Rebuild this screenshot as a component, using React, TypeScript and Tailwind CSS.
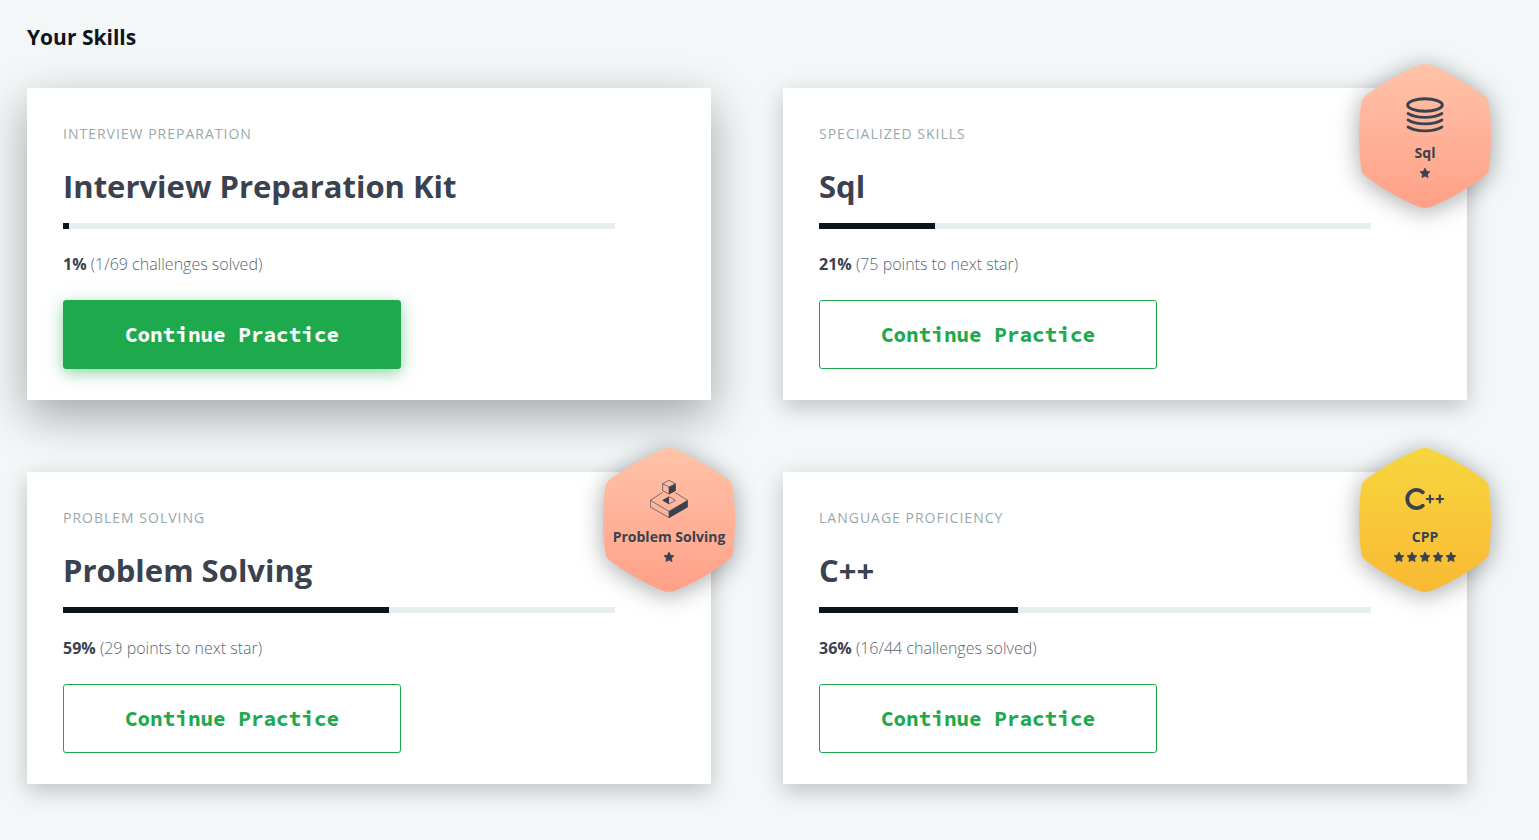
import type { ReactNode } from "react";

type BadgeTone = "bronze" | "gold";

interface Badge {
  name: string;
  stars: number;
  tone: BadgeTone;
  icon: ReactNode;
}

interface Skill {
  id: string;
  category: string;
  title: string;
  percent: number;
  detail: string;
  featured?: boolean;
  badge?: Badge;
}

const tones: Record<BadgeTone, [string, string]> = {
  bronze: ["#ffc3a8", "#ffa088"],
  gold: ["#f7d63e", "#f9b934"],
};

function SqlIcon() {
  return (
    <svg viewBox="0 0 38 38" className="size-[38px]" fill="none" stroke="#39424e" strokeLinecap="round" aria-hidden="true">
      <ellipse cx="19" cy="9" rx="17.3" ry="6.2" strokeWidth="3" />
      <path d="M2 17.5C10 22.6 28 22.6 36 17.5M2 24C10 29.1 28 29.1 36 24M2 31C10 36.1 28 36.1 36 31" strokeWidth="2.7" />
    </svg>
  );
}

function ProblemSolvingIcon() {
  return (
    <svg viewBox="180 135 114 114" className="size-[38px]" fill="none" aria-hidden="true">
      <g stroke="#39424e" strokeWidth="2" strokeLinejoin="round">
        <path d="M218 172L181 196V216L237 248L293 216V196L256 173M181 196L237 229L293 196M237 229V248" />
        <path d="M237 185L256 196L237 207L218 196Z" />
        <path d="M237 136L256 146V167L237 177L218 167V146ZM218 146L237 156L256 146M237 156V177" />
      </g>
      <path fill="#39424e" d="M237 229L293 196V216L237 249ZM237 156L257 146V167L237 178ZM237 185V207L218 196Z" />
    </svg>
  );
}

function CppIcon() {
  return (
    <svg viewBox="0 0 40 38" className="h-[38px] w-[40px]" fill="none" stroke="#39424e" strokeLinecap="round" aria-hidden="true">
      <path d="M17.8 12.3A9.2 9.2 0 1 0 17.8 25.7" strokeWidth="3.8" />
      <path d="M21.8 19H28.2M25 15.6V22.4M31.6 19H38M34.8 15.6V22.4" strokeWidth="2.2" />
    </svg>
  );
}

function Star() {
  return (
    <svg viewBox="0 0 24 24" className="size-3" fill="#39424e" stroke="#39424e" strokeWidth="1.6" strokeLinejoin="round" aria-hidden="true">
      <path d="M12 2.2L15 8.6L21.8 9.5L16.9 14.4L18.1 21.2L12 18L5.9 21.2L7.1 14.4L2.2 9.5L9 8.6Z" />
    </svg>
  );
}

function SkillBadge({ id, badge }: { id: string; badge: Badge }) {
  const [from, to] = tones[badge.tone];
  return (
    <div className="absolute -top-6 -right-6 h-36 w-[132px]">
      <svg viewBox="0 0 132 144" className="absolute inset-0 size-full overflow-visible drop-shadow-[0_3px_12px_rgba(0,0,0,0.35)]" aria-hidden="true">
        <defs>
          <linearGradient id={`tone-${id}`} x1="0" y1="0" x2="0" y2="1">
            <stop offset="0" stopColor={from} />
            <stop offset="1" stopColor={to} />
          </linearGradient>
        </defs>
        <path
          fill={`url(#tone-${id})`}
          d="M60 1.2Q66 -1.2 72 1.2C89 8 110 20 125 31.5Q129 34.5 129.8 39C132.7 60 132.7 84 129.8 105Q129 109.5 125 112.5C110 124 89 136 72 142.8Q66 145.2 60 142.8C43 136 22 124 7 112.5Q3 109.5 2.2 105C-.7 84 -.7 60 2.2 39Q3 34.5 7 31.5C22 20 43 8 60 1.2Z"
        />
      </svg>
      <div className="relative flex flex-col items-center pt-8">
        {badge.icon}
        <span className="mt-[9px] text-sm leading-5 font-bold whitespace-nowrap text-[#39424e]">{badge.name}</span>
        <span className="mt-1 flex gap-px">
          {Array.from({ length: badge.stars }, (_, i) => (
            <Star key={i} />
          ))}
        </span>
      </div>
    </div>
  );
}

const skills: Skill[] = [
  {
    id: "interview",
    category: "Interview Preparation",
    title: "Interview Preparation Kit",
    percent: 1,
    detail: "(1/69 challenges solved)",
    featured: true,
  },
  {
    id: "sql",
    category: "Specialized Skills",
    title: "Sql",
    percent: 21,
    detail: "(75 points to next star)",
    badge: { name: "Sql", stars: 1, tone: "bronze", icon: <SqlIcon /> },
  },
  {
    id: "problem-solving",
    category: "Problem Solving",
    title: "Problem Solving",
    percent: 59,
    detail: "(29 points to next star)",
    badge: { name: "Problem Solving", stars: 1, tone: "bronze", icon: <ProblemSolvingIcon /> },
  },
  {
    id: "cpp",
    category: "Language Proficiency",
    title: "C++",
    percent: 36,
    detail: "(16/44 challenges solved)",
    badge: { name: "CPP", stars: 5, tone: "gold", icon: <CppIcon /> },
  },
];

function SkillCard({ skill }: { skill: Skill }) {
  const shadow = skill.featured
    ? "shadow-[0_16px_44px_rgba(0,0,0,0.33)]"
    : "shadow-[0_7px_22px_rgba(0,0,0,0.22)]";
  const button = skill.featured
    ? "bg-[#1ea94c] text-white shadow-[0_4px_16px_rgba(30,169,76,0.5)]"
    : "bg-white text-[#1ea94c]";
  return (
    <article className={`relative bg-white px-9 pt-9 pb-[31px] ${shadow}`}>
      <p className="text-sm leading-5 tracking-[1px] text-[#97aaac] uppercase">{skill.category}</p>
      <h2 className="mt-6 text-[31px] leading-9 font-bold text-[#39424e]">{skill.title}</h2>
      <div
        className="mt-[19px] mr-[60px] h-1.5 bg-[#e7eeef]"
        role="progressbar"
        aria-label={skill.title}
        aria-valuenow={skill.percent}
        aria-valuemin={0}
        aria-valuemax={100}
      >
        <div className="h-full bg-[#0e141e]" style={{ width: `${skill.percent}%` }} />
      </div>
      <p className="mt-[23px] text-base leading-6 font-light text-[#576871]">
        <strong className="font-bold text-[#39424e]">{skill.percent}%</strong> {skill.detail}
      </p>
      <button
        type="button"
        className={`mt-6 block h-[69px] w-[338px] max-w-full rounded-[3px] border border-[#1ea94c] font-['Source_Code_Pro','DejaVu_Sans_Mono',monospace] text-[21px] font-bold ${button}`}
      >
        Continue Practice
      </button>
      {skill.badge && <SkillBadge id={skill.id} badge={skill.badge} />}
    </article>
  );
}

export default function App() {
  return (
    <main className="min-h-screen overflow-hidden bg-[#f3f7f8] pt-6 pr-[72px] pb-14 pl-[27px] font-['Open_Sans',sans-serif]">
      <h1 className="text-[21px] leading-[26px] font-bold text-[#0e141e]">Your Skills</h1>
      <div className="mt-[38px] grid grid-cols-2 gap-[72px]">
        {skills.map((skill) => (
          <SkillCard key={skill.id} skill={skill} />
        ))}
      </div>
    </main>
  );
}
